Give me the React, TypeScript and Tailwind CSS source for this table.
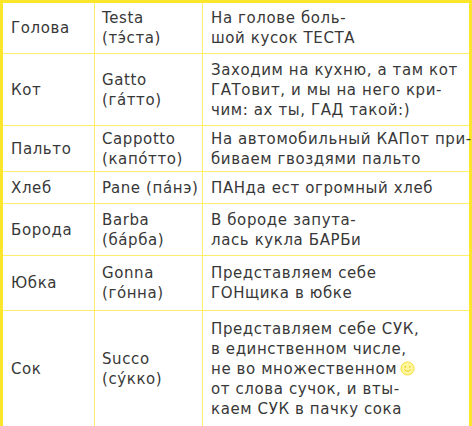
import React from 'react';

function Smiley() {
  return (
    <svg viewBox="0 0 16 16" className="inline-block w-[15px] h-[15px] align-[-2px] ml-[3px]">
      <circle cx="8" cy="8" r="7" fill="#fff59a" stroke="#f5dc3c" strokeWidth="1" />
      <circle cx="5.6" cy="6.2" r="0.9" fill="#e8c92a" />
      <circle cx="10.4" cy="6.2" r="0.9" fill="#e8c92a" />
      <path d="M4.8 9.4 Q8 12.6 11.2 9.4" fill="none" stroke="#e8c92a" strokeWidth="1" strokeLinecap="round" />
    </svg>
  );
}

const rows: { ru: string; it: React.ReactNode; hint: React.ReactNode; h: string }[] = [
  { h: 'h-[52px]', ru: 'Голова', it: <>Testa<br />(тэ́ста)</>, hint: <>На голове боль-<br />шой кусок ТЕСТА</> },
  { h: 'h-[72px]', ru: 'Кот', it: <>Gatto<br />(га́тто)</>, hint: <>Заходим на кухню, а там кот<br />ГАТовит, и мы на него кри-<br />чим: ах ты, ГАД такой:)</> },
  { h: 'h-[46px]', ru: 'Пальто', it: <>Cappotto<br />(капо́тто)</>, hint: <>На автомобильный КАПот при-<br />биваем гвоздями пальто</> },
  { h: 'h-[32px]', ru: 'Хлеб', it: <>Pane (па́нэ)</>, hint: <>ПАНда ест огромный хлеб</> },
  { h: 'h-[52px]', ru: 'Борода', it: <>Barba<br />(ба́рба)</>, hint: <>В бороде запута-<br />лась кукла БАРБи</> },
  { h: 'h-[55px]', ru: 'Юбка', it: <>Gonna<br />(го́нна)</>, hint: <>Представляем себе<br />ГОНщика в юбке</> },
  {
    h: 'h-[117px]',
    ru: 'Сок',
    it: <>Succo<br />(су́кко)</>,
    hint: <>Представляем себе СУК,<br />в единственном числе,<br />не во множественном<Smiley /><br />от слова сучок, и вты-<br />каем СУК в пачку сока</>,
  },
];

export default function App() {
  return (
    <div className="w-[472px] h-[426px] bg-white overflow-hidden" style={{ fontFamily: '"DejaVu Sans", "Noto Sans", sans-serif' }}>
      <table className="w-full border-collapse border-[3px] border-[#fce62b] text-[15px] leading-[20px] tracking-[0.6px] text-[#383838] table-fixed">
        <colgroup>
          <col className="w-[93px]" />
          <col className="w-[108px]" />
          <col />
        </colgroup>
        <tbody>
          {rows.map((r, i) => (
            <tr key={i} className={r.h}>
              <td className="border-[1.5px] border-[#fdee6c] pl-[8px] p-0 align-middle">{r.ru}</td>
              <td className="border-[1.5px] border-[#fdee6c] pl-[7px] p-0 align-middle whitespace-nowrap">{r.it}</td>
              <td className="border-[1.5px] border-[#fdee6c] pl-[8px] p-0 align-middle whitespace-nowrap">{r.hint}</td>
            </tr>
          ))}
        </tbody>
      </table>
    </div>
  );
}
